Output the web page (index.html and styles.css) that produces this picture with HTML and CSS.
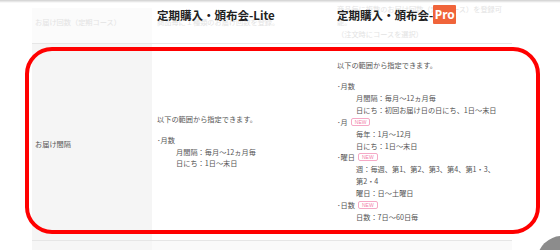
FILE: index.html
```html
<!DOCTYPE html>
<html lang="ja">
<head>
<meta charset="utf-8">
<link rel="stylesheet" href="styles.css">
</head>
<body>
<div class="topshadow"></div>
<div class="sheet">
  <div class="row prev">
    <div class="cell label">お届け回数（定期コース）</div>
    <div class="cell">商品毎に１種類のお届け回数を登録。</div>
    <div class="cell">商品毎に複数のお届け回数（定期コース）を登録可<br>能。<br>（注文時にコースを選択）</div>
  </div>
  <div class="row main">
    <div class="cell label">お届け間隔</div>
    <div class="cell">
      <p class="intro">以下の範囲から指定できます。</p>
      <p>･月数</p>
      <p class="ind">月間隔：毎月～12ヵ月毎</p>
      <p class="ind">日にち：1日～末日</p>
    </div>
    <div class="cell">
      <p class="intro">以下の範囲から指定できます。</p>
      <p>･月数</p>
      <p class="ind">月間隔：毎月～12ヵ月毎</p>
      <p class="ind">日にち：初回お届け日の日にち、1日～末日</p>
      <p>･月<span class="new">NEW</span></p>
      <p class="ind">毎年：1月～12月</p>
      <p class="ind">日にち：1日～末日</p>
      <p>･曜日<span class="new">NEW</span></p>
      <p class="ind">週：毎週、第1、第2、第3、第4、第1・3、<br>第2・4</p>
      <p class="ind">曜日：日～土曜日</p>
      <p>･日数<span class="new">NEW</span></p>
      <p class="ind">日数：7日～60日毎</p>
    </div>
  </div>
  <div class="row next">
    <div class="cell label"></div>
    <div class="cell"></div>
    <div class="cell"></div>
  </div>
</div>
<div class="heads">
  <div class="head">定期購入・頒布会-Lite</div>
  <div class="head">定期購入・頒布会-<span class="pro">Pro</span></div>
</div>
<div class="highlight"></div>
<div class="totop"></div>
</body>
</html>
```
FILE: styles.css
```css
html, body {
  margin: 0;
  padding: 0;
  background: #fff;
  width: 560px;
  height: 250px;
  overflow: hidden;
  font-family: "Noto Sans CJK JP", "Noto Sans", sans-serif;
  color: #555;
  position: relative;
}
.topshadow {
  position: absolute;
  top: 0;
  left: 0;
  width: 560px;
  height: 3px;
  background: linear-gradient(#cfcfcf, rgba(255,255,255,0));
}
.sheet {
  margin-left: 32px;
  width: 480px;
}
.row {
  display: grid;
  grid-template-columns: 120px 180px 180px;
  border-bottom: 1px solid #e6e6e6;
}
.cell {
  display: flex;
  flex-direction: column;
  justify-content: center;
  padding: 0 5px;
  font-size: 7.2px;
  line-height: 11.9px;
}
.cell.label {
  padding: 0 3px;
  background: #f5f5f5;
}
.prev {
  height: 43px;
}
.prev .cell {
  color: #e3e3e3;
  line-height: 12.5px;
  padding-top: 1px;
}
.prev .cell.label {
  background: linear-gradient(#fff 8px, #fbfbfb 8px);
}
.main {
  height: 196px;
}
.main .cell.label {
  padding-top: 6px;
}
.next {
  height: 20px;
  background: #fafafa;
}
.next .cell.label {
  background: #f6f6f6;
}
p {
  margin: 0;
  white-space: nowrap;
}
.intro {
  margin-bottom: 9px;
}
.ind {
  padding-left: 19px;
}
.new {
  display: inline-block;
  vertical-align: 1px;
  margin-left: 3px;
  height: 6px;
  padding: 0 3px;
  border: 1px solid #f5a9c6;
  border-radius: 2px;
  color: #f27fab;
  font-family: "Liberation Sans", sans-serif;
  font-size: 5px;
  line-height: 6px;
}
.heads {
  position: absolute;
  top: 5px;
  left: 152px;
  display: flex;
}
.head {
  width: 170px;
  padding-left: 5px;
  padding-right: 5px;
  height: 19px;
  display: flex;
  align-items: center;
  font-size: 11.5px;
  font-weight: bold;
  color: #222;
  white-space: nowrap;
}
.pro {
  display: inline-block;
  height: 19px;
  width: 23px;
  background: #f0643a;
  color: #fff;
  border-radius: 1px;
  text-align: center;
  line-height: 19px;
  font-family: "Noto Sans", sans-serif;
  font-size: 12px;
}
.highlight {
  position: absolute;
  left: 25px;
  top: 47px;
  width: 507px;
  height: 179px;
  border: 4px solid #ff0000;
  border-radius: 27px;
}
.totop {
  position: absolute;
  left: 537px;
  top: 236px;
  width: 50px;
  height: 50px;
  border-radius: 50%;
  background: #8c8c8c;
}
```
